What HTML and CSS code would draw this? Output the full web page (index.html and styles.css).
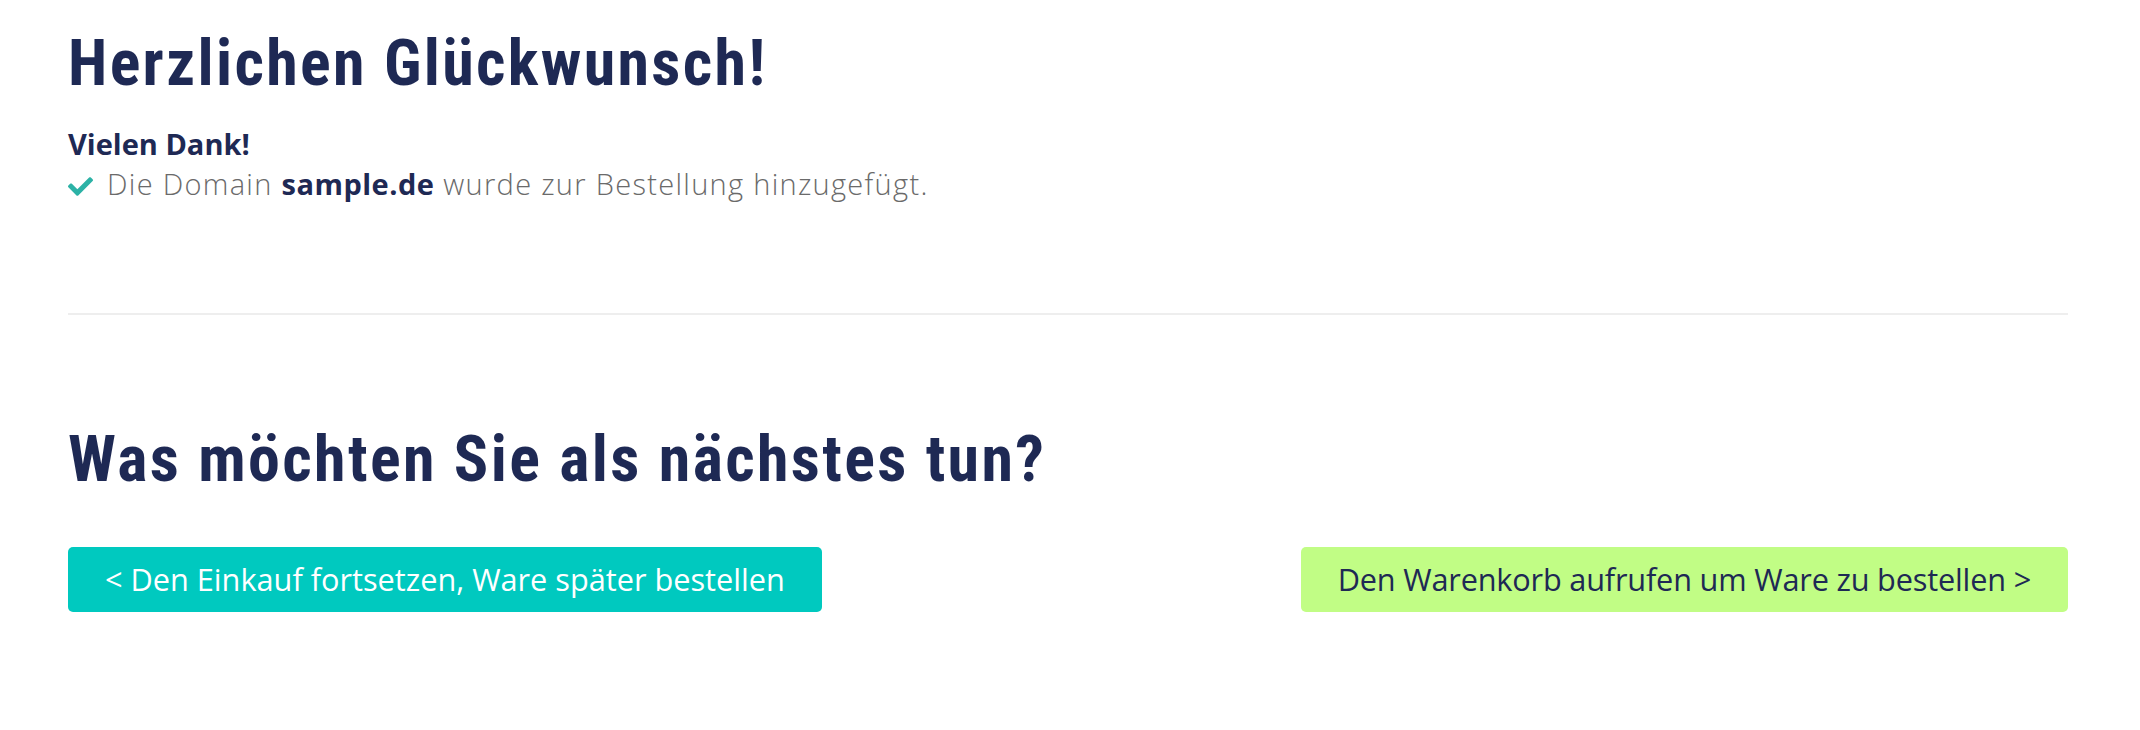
FILE: index.html
```html
<!DOCTYPE html>
<html lang="de">
<head>
    <meta charset="UTF-8">
    <meta name="viewport" content="width=device-width, initial-scale=1.0">
    <title>Domain hinzugefügt</title>
    <link rel="stylesheet" href="styles.css">
</head>
<body>
    <div class="page">
        <h1 class="title">Herzlichen Glückwunsch!</h1>
        <p class="thanks">Vielen Dank!</p>
        <p class="notice"><svg class="check" viewBox="0 0 512 512" aria-hidden="true"><path d="M173.9 439.4l-166.4-166.4c-10-10-10-26.2 0-36.2l36.2-36.2c10-10 26.2-10 36.2 0L192 312.7 432.1 72.6c10-10 26.2-10 36.2 0l36.2 36.2c10 10 10 26.2 0 36.2l-294.4 294.4c-10 10-26.2 10-36.2 0z"/></svg>Die Domain <strong>sample.de</strong> wurde zur Bestellung hinzugefügt.</p>

        <hr class="divider">

        <h2 class="title">Was möchten Sie als nächstes tun?</h2>
        <div class="actions">
            <a class="button continue" href="#">&lt; Den Einkauf fortsetzen, Ware später bestellen</a>
            <a class="button cart" href="#">Den Warenkorb aufrufen um Ware zu bestellen &gt;</a>
        </div>
    </div>
</body>
</html>
```
FILE: styles.css
```css
body {
    margin: 0;
    background: #fff;
    color: #1e2954;
    font-family: "Open Sans", Arial, sans-serif;
}

.page {
    width: 2000px;
    padding: 25px 0 0 68px;
}

.title {
    margin: 0;
    font-family: "Roboto Condensed", "Open Sans", sans-serif;
    font-size: 64px;
    font-weight: 700;
    line-height: 77px;
    letter-spacing: 2.35px;
}

.thanks {
    margin: 22px 0 0;
    font-size: 29px;
    font-weight: 700;
    line-height: 40px;
}

.notice {
    margin: 0;
    color: #6a6a6a;
    font-size: 29px;
    font-weight: 300;
    line-height: 40px;
    letter-spacing: 1.3px;
}

.notice strong {
    color: #1e2954;
    font-weight: 700;
    letter-spacing: 0.5px;
}

.check {
    width: 25px;
    height: 25px;
    margin-right: 14px;
    vertical-align: -4px;
    fill: #2cb2a6;
}

.divider {
    margin: 109px 0 0;
    border: none;
    border-top: 2px solid #eeeeee;
}

h2.title {
    margin-top: 106px;
}

.actions {
    display: flex;
    justify-content: space-between;
    margin-top: 49px;
}

.button {
    display: block;
    height: 65px;
    padding: 0 37px;
    border-radius: 5px;
    font-size: 30.7px;
    line-height: 65px;
    text-decoration: none;
}

.continue {
    background: #00c9bf;
    color: #fff;
}

.cart {
    background: #c1fd85;
    color: #1e2954;
    letter-spacing: -0.18px;
}
```
